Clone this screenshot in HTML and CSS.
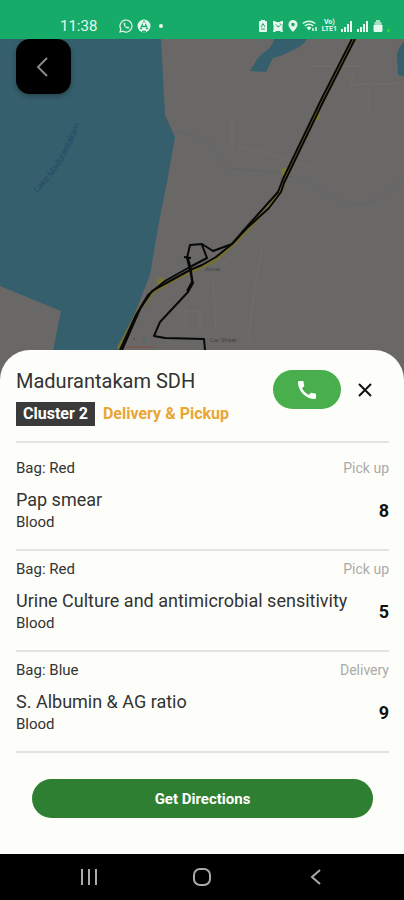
FILE: index.html
```html
<!DOCTYPE html>
<html lang="en">
<head>
  <meta charset="UTF-8" />
  <meta name="viewport" content="width=device-width, initial-scale=1.0" />
  <title>Madurantakam SDH</title>
  <link rel="stylesheet" href="styles.css">
</head>
<body>
  <header class="status-bar">
    <div class="status-left">
      <span class="clock">11:38</span>
      <svg class="icon" width="14" height="14" viewBox="0 0 14 14" fill="none" stroke="currentColor" stroke-width="1.2">
        <path d="M1 13l.8-3A6 6 0 1 1 4 12.2z" />
        <path d="M4.6 4.2c0 3 2.2 5.2 5.2 5.4l.5-1.4-1.5-.8-.8.7C7 7.7 6.2 6.8 5.9 6l.7-.8-.7-1.5z" fill="currentColor" stroke="none" />
      </svg>
      <svg class="icon" width="14" height="14" viewBox="0 0 14 14">
        <circle cx="7" cy="7" r="6.5" fill="currentColor" />
        <path d="M7 2.5L4.5 7.5h5zM3 9.5h2M9 9.5h2M5 12.5h4" fill="none" stroke="#17ab69" stroke-width="1.4" />
        <circle cx="7" cy="4.5" r="1.5" fill="currentColor" />
      </svg>
      <span class="dot"></span>
    </div>
    <div class="status-right">
      <svg class="icon" width="10" height="14" viewBox="0 0 10 14">
        <path d="M3 1h4v1h1.5l.5 1v9.5l-1 .5H2l-1-.5V3l.5-1H3z" fill="currentColor" />
        <path d="M3 8l2-3.5L7 8M3 10h4" stroke="#17ab69" fill="none" />
      </svg>
      <svg class="icon" width="12" height="14" viewBox="0 0 12 14">
        <path d="M1 2h2l1 1h4l1-1h2v3l-.5 1v5l.5 2H9l-1-1H4l-1 1H1l.5-2V6L1 5z" fill="currentColor" />
        <path d="M4 5.5L6 8l2.500-1.500M8 4.500l1.500 1.500" stroke="#17ab69" fill="none" />
      </svg>
      <svg class="icon" width="10" height="14" viewBox="0 0 10 14">
        <path d="M5 1a4.5 4.5 0 0 0-4.5 4.5C.5 8.5 5 13 5 13s4.5-4.5 4.5-7.5A4.5 4.5 0 0 0 5 1zm0 2.8a1.8 1.8 0 1 1 0 3.6 1.8 1.8 0 0 1 0-3.6z" fill="currentColor" fill-rule="evenodd" />
      </svg>
      <svg class="icon" width="16" height="14" viewBox="0 0 16 14" fill="none" stroke="currentColor" stroke-width="1.5">
        <path d="M.8 4.5Q7 0 13.2 4.5M2.8 6.8Q7 3.8 11.2 6.8M5 9Q7 7.5 9 9" />
        <path d="M7 11.5L5 9h4z" fill="currentColor" stroke="none" />
        <path d="M11 12V9M14 8v4" />
      </svg>
      <span class="volte">Vo)<br>LTE1</span>
      <svg class="icon" width="12" height="14" viewBox="0 0 12 14" fill="currentColor">
        <path d="M0 10h2v3H0zM3 8h2v5H3zM6 5h2v8H6zM9 2h2v11H9z" />
      </svg>
      <svg class="icon" width="12" height="14" viewBox="0 0 12 14" fill="currentColor">
        <path d="M0 10h2v3H0zM3 8h2v5H3zM6 5h2v8H6zM9 2h2v11H9z" />
      </svg>
      <svg class="icon" width="10" height="14" viewBox="0 0 10 14" fill="currentColor">
        <path d="M3 1h4v2h1.5v3h-7V3H3z" opacity=".7" />
        <path d="M.5 6h9v6l-1 1h-7l-1-1z" />
      </svg>
      <span class="dot dot-green"></span>
    </div>
  </header>

  <main class="screen">
    <svg class="map" viewBox="0 39 404 815" preserveAspectRatio="xMidYMin slice" role="img" aria-label="Route map">
      <rect y="39" width="404" height="815" fill="#696867" />

      <!-- minor roads -->
      <g fill="none" stroke="#706f6d">
        <path d="M216 98l24-24M232 120v30M312 66h50M350 85l54-2M369 85v30M354 70l-4 16M238 147l32 7 40 14" />
        <path d="M262 250l-6 30-8 60M180 310l20-18 14-16 24-26M176 311h24v20M186 308v20M213 280l3 50" />
      </g>
      <path d="M175 132q15 0 35 10l16 26 48 4 30 8 40 22q14 6 28 0l32-22" fill="none" stroke="#60656b" />

      <!-- water -->
      <g fill="#355f6c">
        <path d="M0 39h161l4 76 10 22-8 45-8 40-9 53-12 30-19 46H53l8-40-61-25z" />
        <path d="M274 39q-2 8-8 12-8 5-11 12l-5 8 16 1 7-14q12-3 20-8 10-4 14-11zM404 42q-8 8-7 16l1 17 6 1z" />
      </g>

      <path id="lake-line" d="M37 193Q66 166 83 115" fill="none" />
      <text class="lake-label"><textPath href="#lake-line">Lake Madurantakam</textPath></text>

      <!-- highway -->
      <path d="M353 39l-36 72-29 62-7 18-13 17-32 34-20 18-44 21-19 11-15 19-20 38" fill="none" stroke="#77702f" stroke-width="3" />
      <g fill="#7b7630">
        <circle cx="316" cy="116" r="4" />
        <circle cx="285" cy="172" r="4" />
        <circle cx="161" cy="282" r="4" />
      </g>

      <!-- planned route -->
      <g class="route">
        <path d="M352 39l-32 63-37 77-5 13-34 38-12 14" />
        <path d="M355 39l-33 65-38 79-3 9-12 16-22 20-15 16-16 13-14 8-12 5-20 11-18 10-12 18-18 41" />
        <path d="M202 245l5 13-19 10-23 13-17 14-12 20-16 35" />
        <path d="M232 244l-19 7-11-7-12 1-3 13 3 12 3 13-5 9-28 30-6 14 11 2 39 1 1 11" />
        <path d="M188 258l3 12 1 12-5 9M184 257l7 1" />
      </g>
      <circle cx="134" cy="339" r="1" fill="#733d3d" />
      <circle cx="144" cy="341" r="1" fill="#236c70" />
      <path d="M126 347h28" stroke="#765a53" stroke-width="2" />
      <text class="place-label" x="204" y="271">Jinnai</text>
      <text class="place-label" x="210" y="342">Car Street</text>
    </svg>

    <button class="back-btn" aria-label="Back">
      <svg width="24" height="24" viewBox="0 0 24 24" fill="none" stroke="currentColor" stroke-width="2">
        <path d="M15 3L6 12l9 9" />
      </svg>
    </button>

    <section class="sheet">
      <div class="sheet-head">
        <div class="place">
          <h1>Madurantakam SDH</h1>
          <div class="tags">
            <span class="cluster">Cluster 2</span>
            <span class="kind">Delivery &amp; Pickup</span>
          </div>
        </div>
        <div class="actions">
          <button class="call-btn" aria-label="Call">
            <svg width="24" height="24" viewBox="0 0 24 24" fill="currentColor">
              <path d="M20.01 15.38c-1.23 0-2.42-.2-3.53-.56a.977.977 0 0 0-1.01.24l-1.57 1.97c-2.83-1.35-5.48-3.9-6.89-6.83l1.95-1.66c.27-.28.35-.67.24-1.02-.37-1.11-.56-2.3-.56-3.53 0-.54-.45-.99-.99-.99H4.19C3.65 3 3 3.24 3 3.99 3 13.28 10.73 21 20.01 21c.71 0 .99-.63.99-1.18v-3.45c0-.54-.45-.99-.99-.99z" />
            </svg>
          </button>
          <button class="close-btn" aria-label="Close">
            <svg width="14" height="14" viewBox="0 0 14 14" fill="none" stroke="currentColor" stroke-width="2">
              <path d="M1 1l12 12M13 1L1 13" />
            </svg>
          </button>
        </div>
      </div>

      <ul class="bags">
        <li class="bag">
          <div class="bag-top">
            <span>Bag: Red</span>
            <span class="bag-type">Pick up</span>
          </div>
          <div class="bag-body">
            <div>
              <h2>Pap smear</h2>
              <p>Blood</p>
            </div>
            <strong class="count">8</strong>
          </div>
        </li>
        <li class="bag">
          <div class="bag-top">
            <span>Bag: Red</span>
            <span class="bag-type">Pick up</span>
          </div>
          <div class="bag-body">
            <div>
              <h2>Urine Culture and antimicrobial sensitivity</h2>
              <p>Blood</p>
            </div>
            <strong class="count">5</strong>
          </div>
        </li>
        <li class="bag">
          <div class="bag-top">
            <span>Bag: Blue</span>
            <span class="bag-type">Delivery</span>
          </div>
          <div class="bag-body">
            <div>
              <h2>S. Albumin &amp; AG ratio</h2>
              <p>Blood</p>
            </div>
            <strong class="count">9</strong>
          </div>
        </li>
      </ul>

      <button class="directions-btn">Get Directions</button>
    </section>
  </main>

  <nav class="nav-bar">
    <button aria-label="Recent apps">
      <svg width="20" height="20" viewBox="0 0 20 20" fill="none" stroke="currentColor" stroke-width="2">
        <path d="M3 2v16M10 2v16M17 2v16" />
      </svg>
    </button>
    <button aria-label="Home">
      <svg width="20" height="20" viewBox="0 0 20 20" fill="none" stroke="currentColor" stroke-width="2">
        <rect x="2" y="2" width="16" height="16" rx="6" />
      </svg>
    </button>
    <button aria-label="Back">
      <svg width="20" height="20" viewBox="0 0 20 20" fill="none" stroke="currentColor" stroke-width="2">
        <path d="M15 3l-8 7 8 7" />
      </svg>
    </button>
  </nav>
</body>
</html>
```
FILE: styles.css
```css
* {
  box-sizing: border-box;
}
body {
  margin: 0;
  min-height: 100vh;
  display: flex;
  flex-direction: column;
  font-family: Roboto, "Liberation Sans", sans-serif;
  color: #333;
  background-color: #000;
}
h1, h2, p, ul {
  margin: 0;
  padding: 0;
}
button {
  padding: 0;
  border: none;
  font-family: inherit;
  cursor: pointer;
  display: flex;
  align-items: center;
  justify-content: center;
}

.status-bar {
  height: 39px;
  padding: 12px 14px 0 60px;
  display: flex;
  align-items: center;
  justify-content: space-between;
  background-color: #17ab69;
  color: #e6f7ee;
}
.status-left, .status-right {
  display: flex;
  align-items: center;
  gap: 4px;
}
.clock {
  font-size: 15px;
  line-height: 16px;
  margin-right: 18px;
}
.icon {
  flex: none;
}
.dot {
  width: 4px;
  height: 4px;
  margin-left: 4px;
  border-radius: 50%;
  background-color: #e6f7ee;
}
.dot-green {
  width: 3px;
  height: 3px;
  margin: 10px 0 0;
  background-color: #22e03c;
}
.volte {
  font-size: 7px;
  font-weight: 700;
  line-height: 7px;
  text-align: center;
}

.screen {
  flex: 1;
  position: relative;
  display: flex;
  flex-direction: column;
  overflow: hidden;
}
.map {
  position: absolute;
  top: 0;
  left: 0;
  width: 100%;
  height: 100%;
}
.route {
  fill: none;
  stroke: #080808;
  stroke-width: 2;
  stroke-linejoin: round;
}
.lake-label {
  font-size: 9px;
  fill: #244a66;
}
.place-label {
  font-size: 6px;
  fill: #444;
}
.back-btn {
  position: relative;
  width: 55px;
  height: 55px;
  margin-left: 16px;
  border-radius: 14px;
  background-color: #000;
  color: #888;
  box-shadow: 0 2px 5px rgba(0,0,0,0.3);
}

.sheet {
  position: relative;
  margin-top: auto;
  padding: 20px 15px 36px 16px;
  border-radius: 30px 30px 0 0;
  background-color: #fdfef9;
}
.sheet-head {
  display: flex;
  justify-content: space-between;
  padding-bottom: 15px;
}
h1 {
  font-size: 20px;
  font-weight: 400;
  line-height: 22px;
}
.tags {
  display: flex;
  align-items: center;
  gap: 8px;
  margin-top: 10px;
  font-size: 16px;
  font-weight: 700;
  line-height: 24px;
}
.cluster {
  padding: 0 7px;
  background-color: #3b3a3b;
  color: #fff;
}
.kind {
  color: #eba534;
}
.actions {
  display: flex;
  align-items: center;
  align-self: flex-start;
}
.call-btn {
  width: 68px;
  height: 39px;
  border-radius: 20px;
  background-color: #48af4c;
  color: #fff;
}
.close-btn {
  width: 48px;
  height: 39px;
  background: none;
  color: #111;
}

.bags {
  list-style: none;
  border-top: 2px solid #e3e4df;
  padding-top: 7px;
}
.bag {
  padding: 8px 0 16px;
  border-bottom: 2px solid #e3e4df;
}
.bag-top {
  display: flex;
  justify-content: space-between;
  align-items: center;
  font-size: 15px;
  line-height: 20px;
}
.bag-type {
  font-size: 14px;
  color: #aaa;
}
.bag-body {
  display: flex;
  justify-content: space-between;
  align-items: center;
  margin-top: 10px;
}
h2 {
  font-size: 18px;
  font-weight: 400;
  line-height: 24px;
}
p {
  font-size: 15px;
  line-height: 21px;
}
.count {
  font-size: 18px;
  font-weight: 700;
  color: #111;
}
.directions-btn {
  width: calc(100% - 32px);
  height: 39px;
  margin: 26px auto 0;
  border-radius: 20px;
  background-color: #2f7f32;
  color: #fff;
  font-size: 15px;
  font-weight: 700;
}

.nav-bar {
  height: 46px;
  padding: 0 32px;
  display: flex;
  align-items: center;
  justify-content: space-around;
  background-color: #000;
}
.nav-bar button {
  width: 48px;
  height: 40px;
  background: none;
  color: #aaa;
}
```
